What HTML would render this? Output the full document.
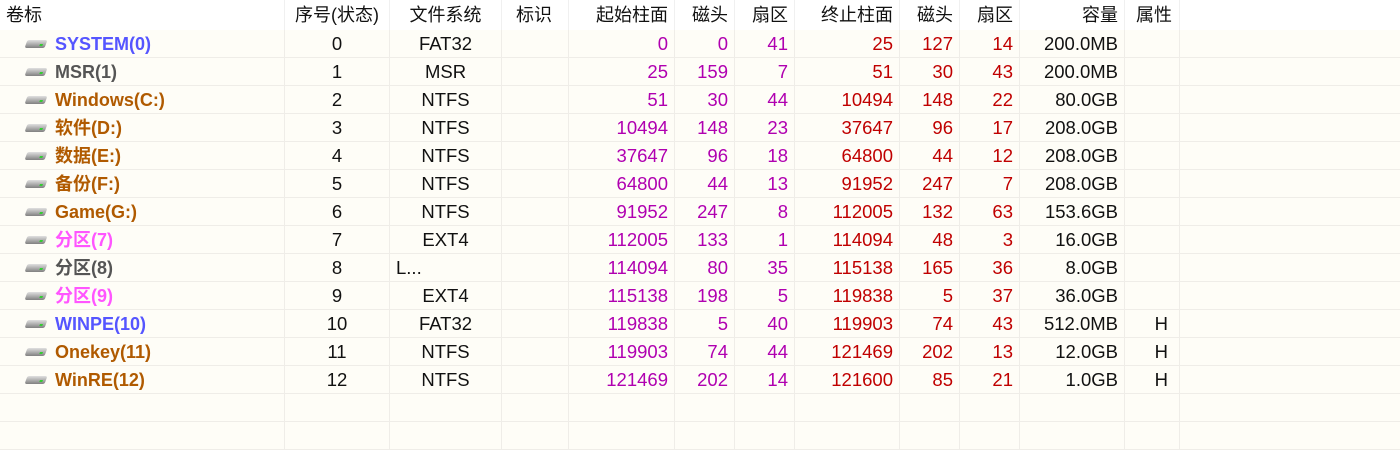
<!DOCTYPE html>
<html><head><meta charset="utf-8"><style>
*{margin:0;padding:0;box-sizing:border-box}
body{width:1400px;height:449px;overflow:hidden;background:#fefdf7;font-family:"Liberation Sans","Noto Sans CJK SC",sans-serif;font-size:18px;color:#111;position:relative}
.hdr{position:absolute;left:0;top:0;width:1400px;height:30px;background:#fff}
.row{position:absolute;left:0;width:1400px;height:28px;border-bottom:1px solid #efede8}
.c{position:absolute;top:0;height:100%;line-height:28px;white-space:nowrap;border-right:1px solid #efede8;padding:0 6px}
.hdr .c{line-height:30px;border-right:1px solid #f0f0f0}
.r{text-align:right}.m{text-align:center}
.s{color:#b000b0}.e{color:#c00000}
.n{font-size:18.5px}
.nm{font-weight:bold;padding-left:55px}
.ic{position:absolute;left:26px;top:10px;width:20px;height:8px;background:linear-gradient(#e0e0e0,#808080);border-radius:2px;transform:skewX(-20deg)}
.ic:after{content:"";position:absolute;right:3px;top:4px;width:3px;height:2px;background:#3c3}
</style></head><body>
<div class="hdr">
<div class="c" style="left:0;width:285px">卷标</div>
<div class="c m" style="left:285px;width:105px">序号(状态)</div>
<div class="c m" style="left:390px;width:112px">文件系统</div>
<div class="c" style="left:502px;width:67px;padding-left:14px">标识</div>
<div class="c r" style="left:569px;width:106px">起始柱面</div>
<div class="c r" style="left:675px;width:60px">磁头</div>
<div class="c r" style="left:735px;width:60px">扇区</div>
<div class="c r" style="left:795px;width:105px">终止柱面</div>
<div class="c r" style="left:900px;width:60px">磁头</div>
<div class="c r" style="left:960px;width:60px">扇区</div>
<div class="c r" style="left:1020px;width:105px">容量</div>
<div class="c" style="left:1125px;width:55px;padding-left:11px">属性</div>
</div>
<div id="rows"></div>
<script>
var d=[["SYSTEM(0)","#5555ff",0,"FAT32",0,0,41,25,127,14,"200.0MB",""],
["MSR(1)","#555555",1,"MSR",25,159,7,51,30,43,"200.0MB",""],
["Windows(C:)","#b05a00",2,"NTFS",51,30,44,10494,148,22,"80.0GB",""],
["软件(D:)","#b05a00",3,"NTFS",10494,148,23,37647,96,17,"208.0GB",""],
["数据(E:)","#b05a00",4,"NTFS",37647,96,18,64800,44,12,"208.0GB",""],
["备份(F:)","#b05a00",5,"NTFS",64800,44,13,91952,247,7,"208.0GB",""],
["Game(G:)","#b05a00",6,"NTFS",91952,247,8,112005,132,63,"153.6GB",""],
["分区(7)","#ff55ff",7,"EXT4",112005,133,1,114094,48,3,"16.0GB",""],
["分区(8)","#555555",8,"L...",114094,80,35,115138,165,36,"8.0GB",""],
["分区(9)","#ff55ff",9,"EXT4",115138,198,5,119838,5,37,"36.0GB",""],
["WINPE(10)","#5555ff",10,"FAT32",119838,5,40,119903,74,43,"512.0MB","H"],
["Onekey(11)","#b05a00",11,"NTFS",119903,74,44,121469,202,13,"12.0GB","H"],
["WinRE(12)","#b05a00",12,"NTFS",121469,202,14,121600,85,21,"1.0GB","H"],
["","",""," ","","","","","","","",""],["","",""," ","","","","","","","",""]];
var h="";
d.forEach(function(r,i){
h+='<div class="row" style="top:'+(30+28*i)+'px">';
h+='<div class="c nm" style="left:0;width:285px;color:'+r[1]+'">'+(r[0]?'<span class="ic"></span>':'')+r[0]+'</div>';
h+='<div class="c m n" style="left:285px;width:105px">'+r[2]+'</div>';
h+='<div class="c n '+(r[3]=="L..."?'':'m')+'" style="left:390px;width:112px">'+r[3]+'</div>';
h+='<div class="c" style="left:502px;width:67px"></div>';
h+='<div class="c r s n" style="left:569px;width:106px">'+r[4]+'</div>';
h+='<div class="c r s n" style="left:675px;width:60px">'+r[5]+'</div>';
h+='<div class="c r s n" style="left:735px;width:60px">'+r[6]+'</div>';
h+='<div class="c r e n" style="left:795px;width:105px">'+r[7]+'</div>';
h+='<div class="c r e n" style="left:900px;width:60px">'+r[8]+'</div>';
h+='<div class="c r e n" style="left:960px;width:60px">'+r[9]+'</div>';
h+='<div class="c r n" style="left:1020px;width:105px">'+r[10]+'</div>';
h+='<div class="c r n" style="left:1125px;width:55px;padding-right:11px">'+r[11]+'</div>';
h+='</div>';});
document.getElementById("rows").innerHTML=h;
</script>
</body></html>
